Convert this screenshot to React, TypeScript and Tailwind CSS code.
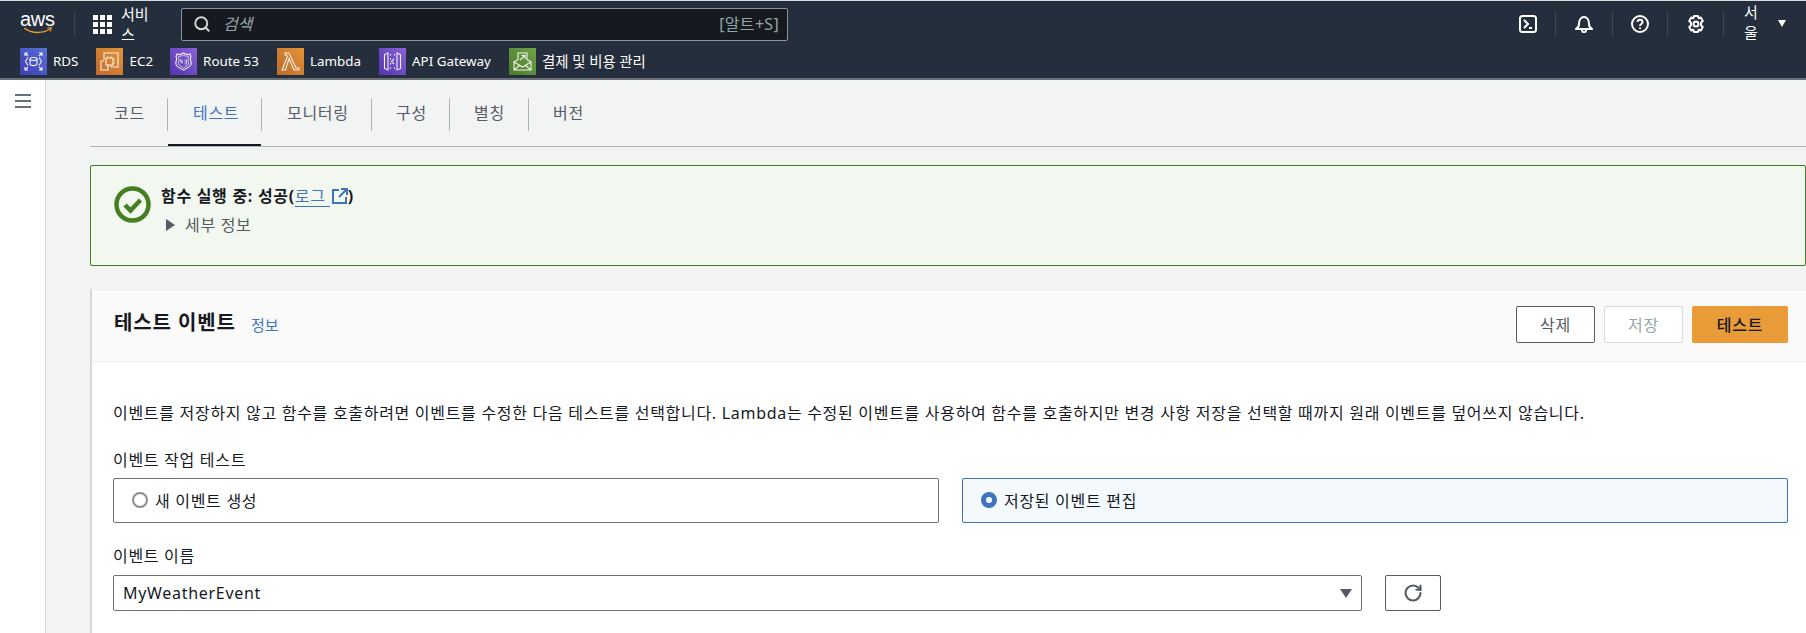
import { RotateCw, Search } from 'lucide-react';
import type { ReactNode } from 'react';

const FONT = 'font-["Noto_Sans","Noto_Sans_CJK_KR",sans-serif]';

const ServiceTile = ({ gradient, children }: { gradient: string; children: ReactNode }) => (
  <span className={`flex h-[27px] w-[27px] shrink-0 items-center justify-center ${gradient}`}>
    <svg viewBox="0 0 27 27" className="h-[27px] w-[27px]" fill="none" stroke="#f4f0ea" strokeWidth="1.1">
      {children}
    </svg>
  </span>
);

const services = [
  {
    name: 'RDS',
    gradient: 'bg-gradient-to-tr from-[#3d3bb5] to-[#5a70d8]',
    gap: 'mr-[18px]',
    text: 'text-[13.400px]',
    icon: (
      <>
        <ellipse cx="13.500" cy="11" rx="3.500" ry="1.500" />
        <path d="M10 11v5c0 1 1.600 1.600 3.500 1.600S17 17 17 16v-5M8 9.500l-2.500 4 2.500 4M19 9.500l2.500 4-2.500 4" />
        <path d="M5 8V5h3M19 5h3v3M5 19v3h3M22 19v3h-3M5 5l3 3M22 5l-3 3M5 22l3-3M22 22l-3-3" />
      </>
    ),
  },
  {
    name: 'EC2',
    gradient: 'bg-gradient-to-tr from-[#bf6a2c] to-[#e39336]',
    gap: 'mr-[17px]',
    text: 'text-[13.400px]',
    icon: (
      <>
        <rect x="10" y="10" width="7" height="7" />
        <path d="M8 12V5h14v14h-7M12 17v5H5v-9h3" />
        <path d="M12 8v2M15 8v2M12 17v2M15 17v2M17 12h2M17 15h2" strokeWidth="0.8" />
      </>
    ),
  },
  {
    name: 'Route 53',
    gradient: 'bg-gradient-to-tr from-[#5433ad] to-[#8b62d8]',
    gap: 'mr-[18px]',
    text: 'text-[13.400px]',
    icon: (
      <>
        <path d="M7 6c2 1 4 .5 6.500-1 2.500 1.500 4.500 2 6.500 1l1 2.500c-1 1.500-1 3 0 5 1 3-1 6-7.500 8.500C7 19.500 5 16.500 6 13.500c1-2 1-3.500 0-5z" />
        <path d="M9 8c1.500.3 3 0 4.500-.8C15 8 16.500 8.300 18 8l.5 1.500c-.8 1.500-.8 3 0 4.500.6 2-1 4-5 5.800-4-1.800-5.600-3.800-5-5.800.8-1.500.8-3 0-4.500z" strokeWidth="0.8" />
        <path d="M10.500 15h2v-1.500h-2V12h2M14.500 12h2v4h-2M14.500 14h2" strokeWidth="0.7" />
      </>
    ),
  },
  {
    name: 'Lambda',
    gradient: 'bg-gradient-to-tr from-[#bf6a2c] to-[#e39336]',
    gap: 'mr-[18px]',
    text: 'text-[13.400px]',
    icon: <path d="M8 5h4l7 15h3v2h-5L12 10.500 8.500 22H5l5.500-13.500L9.500 7H8z" />,
  },
  {
    name: 'API Gateway',
    gradient: 'bg-gradient-to-tr from-[#5433ad] to-[#8b62d8]',
    gap: 'mr-[18px]',
    text: 'text-[13.400px]',
    icon: (
      <>
        <path d="M9 5 5.500 6.500v14L9 22zM18 5l3.500 1.500v14L18 22z" />
        <path d="M11.500 6v1.500M11.500 10v1.500M11.500 15v1.500M11.500 19.500V21M15.500 6v1.500M15.500 19.500V21M15 11l-2.500 2.500L15 16" />
      </>
    ),
  },
  {
    name: '결제 및 비용 관리',
    gradient: 'bg-gradient-to-tr from-[#4a7a2c] to-[#71a348]',
    gap: '',
    text: 'text-[14.400px]',
    icon: (
      <>
        <path d="M9 12V5h9v7" />
        <path d="M5 14l4-2.500M22 14l-4-2.500M5 14v8h17v-8l-8.500 5zM5 22l6-5M22 22l-6-5" />
        <path d="M11 12l5-4.500M12.500 7.500H16V11" />
      </>
    ),
  },
];

const tabs = [
  { name: '코드', width: 'w-[78px] pl-[24px]', active: false },
  { name: '테스트', width: 'w-[94px] pl-[25px]', active: true },
  { name: '모니터링', width: 'w-[110px] pl-[25px]', active: false },
  { name: '구성', width: 'w-[78px] pl-[24px]', active: false },
  { name: '별칭', width: 'w-[79px] pl-[24px]', active: false },
  { name: '버전', width: 'w-[80px] pl-[24px]', active: false },
];

const TopDivider = ({ className }: { className: string }) => (
  <span className={`h-[26px] w-px bg-[#414750] ${className}`} />
);

const RadioTile = ({ label, selected }: { label: string; selected?: boolean }) => (
  <div
    className={`flex h-[45px] flex-1 items-start rounded-[2px] border pl-[18px] pt-[12px] ${
      selected ? 'border-[#3f74bd] bg-[#f4f9fe]' : 'border-[#6f7175] bg-white'
    }`}
  >
    {selected ? (
      <span className="mt-[1px] h-[16px] w-[16px] rounded-full border-[5px] border-[#3f74bd] bg-white" />
    ) : (
      <span className="mt-[1px] h-[16px] w-[16px] rounded-full border-2 border-[#8a8d91] bg-white" />
    )}
    <span className="ml-[7px] leading-[20px] text-[#16191f]">{label}</span>
  </div>
);

export default function App() {
  return (
    <div className={`flex h-[633px] w-[1806px] flex-col overflow-hidden bg-[#f2f3f3] ${FONT}`}>
      {/* Top nav */}
      <header className="h-[80px] shrink-0 border-t border-b-2 border-t-[#d5dbdb] border-b-[#6a7078] bg-[#252e3c] text-white">
        <div className="flex h-[46px] items-center">
          <div className="relative ml-[20px] h-[24px] w-[36px]">
            <span className='absolute left-0 top-[-5px] font-["Liberation_Sans",sans-serif] text-[20px] leading-[24px] tracking-[-0.3px]'>aws</span>
            <svg viewBox="0 0 42 12" className="absolute left-0 top-[15px] h-[8px] w-[36px]" fill="none">
              <path d="M1 2c11 8 27 8 38 1" stroke="#e9962f" strokeWidth="2.200" strokeLinecap="round" />
              <path d="M35 1.500l6-.5-1.500 5.500" stroke="#e9962f" strokeWidth="1.800" />
            </svg>
          </div>
          <TopDivider className="ml-[18px]" />
          <svg viewBox="0 0 19 19" className="ml-[18px] h-[19px] w-[19px]" fill="#fff">
            {[0, 7, 14].map((y) =>
              [0, 7, 14].map((x) => <rect key={`${x}-${y}`} x={x} y={y} width="5" height="5" />)
            )}
          </svg>
          <span className="ml-[9px] w-[41px] text-[15px] leading-[20px]">서비스</span>
          <div className="ml-[19px] flex h-[33px] w-[607px] items-center rounded-[2px] border border-[#8d9399] bg-[#16191f] pl-[11px] pr-[8px]">
            <Search className="h-[18px] w-[18px] text-[#d5dbdb]" strokeWidth={2.500} />
            <span className="ml-[12px] text-[16px] italic text-[#95a5a6]">검색</span>
            <span className="ml-auto text-[16px] tracking-[0.3px] text-[#95a5a6]">[알트+S]</span>
          </div>
          <div className="ml-auto flex h-[26px] items-center">
            <svg viewBox="0 0 18 18" className="h-[18px] w-[18px]" fill="none" stroke="#fff" strokeWidth="2">
              <rect x="1" y="1" width="16" height="16" rx="2.500" />
              <path d="M5 5l4 4-4 4M10 13h3" />
            </svg>
            <TopDivider className="ml-[18px] mr-[19px]" />
            <svg viewBox="0 0 18 18" className="h-[18px] w-[18px]" fill="none" stroke="#fff" strokeWidth="2">
              <path d="M1 14c2-1 3-2 3-5 0-4 2-7 5-7s5 3 5 7c0 3 1 4 3 5z" strokeLinejoin="round" />
              <path d="M7 15c0 3 4 3 4 0" />
            </svg>
            <TopDivider className="ml-[19px] mr-[18px]" />
            <svg viewBox="0 0 18 18" className="h-[18px] w-[18px]" fill="none" stroke="#fff" strokeWidth="2">
              <circle cx="9" cy="9" r="8" />
              <path d="M6.500 7c0-3 5-3 5 0 0 2-2.500 2-2.500 4" />
              <path d="M9 12.500v1.500" />
            </svg>
            <TopDivider className="ml-[18px] mr-[19px]" />
            <svg viewBox="0 0 18 18" className="h-[18px] w-[18px]" fill="none" stroke="#fff" strokeWidth="2" strokeLinejoin="round">
              <path d="M7 1h4l.6 2.300 2.200-.8 2 3.500-1.700 1.600v2.800L15.800 12l-2 3.500-2.200-.8L11 17H7l-.6-2.300-2.200.8-2-3.500 1.700-1.600V7.600L2.200 6l2-3.500 2.200.8z" />
              <circle cx="9" cy="9" r="2.500" />
            </svg>
            <TopDivider className="ml-[18px] mr-[20px]" />
            <span className="mt-[-4px] w-[26px] text-[15px] leading-[20px]">서울</span>
            <span className="ml-[8px] mr-[20px] mt-[-2px] h-0 w-0 border-x-[4px] border-t-[7px] border-x-transparent border-t-white" />
          </div>
        </div>
        <div className="flex h-[31px] items-start pl-[20px] pt-[1px]">
          {services.map((s) => (
            <div key={s.name} className={`flex items-center ${s.gap}`}>
              <ServiceTile gradient={s.gradient}>{s.icon}</ServiceTile>
              <span className={`ml-[6px] leading-[27px] ${s.text}`}>{s.name}</span>
            </div>
          ))}
        </div>
      </header>

      <div className="flex min-h-0 flex-1">
        {/* Side rail */}
        <aside className="w-[46px] shrink-0 border-r border-[#d5dbdb] bg-white pl-[15px] pt-[14px]">
          <div className="flex h-[14px] w-[16px] flex-col justify-between">
            <span className="h-[2px] bg-[#687078]" />
            <span className="h-[2px] bg-[#687078]" />
            <span className="h-[2px] bg-[#687078]" />
          </div>
        </aside>

        <main className="flex min-w-0 flex-1 flex-col pl-[44px] text-[16px] tracking-[0.7px]">
          {/* Tabs */}
          <nav className="flex h-[67px] shrink-0 items-start border-b border-[#aab7b8] pt-[18px]">
            {tabs.map((t, i) => (
              <div
                key={t.name}
                className={`relative h-[33px] ${t.width} ${i < tabs.length - 1 ? 'border-r border-[#aab7b8]' : ''}`}
              >
                <span className={`leading-[30px] ${t.active ? 'text-[#3f74bd]' : 'text-[#545b64]'}`}>{t.name}</span>
                {t.active && <span className="absolute bottom-[-15px] left-0 right-0 h-[2px] bg-[#16191f]" />}
              </div>
            ))}
          </nav>

          {/* Success flash */}
          <section className="mt-[18px] flex h-[101px] shrink-0 rounded-[2px] border border-[#3f7f1f] bg-[#f2f8f0] pl-[23px] pt-[20px]">
            <svg viewBox="0 0 37 37" className="h-[37px] w-[37px] shrink-0" fill="none" stroke="#467f21">
              <circle cx="18.500" cy="18.500" r="16" strokeWidth="4.500" />
              <path d="M11 19l5.500 5.500 10-10.500" strokeWidth="4.500" />
            </svg>
            <div className="ml-[10px]">
              <div className="flex h-[20px] items-center font-bold leading-[20px] text-[#16191f]">
                함수 실행 중: 성공(
                <span className="border-b border-[#3f74bd] pr-[4px] font-normal text-[#3f74bd]">로그</span>
                <svg viewBox="0 0 16 16" className="ml-[2px] h-[16px] w-[16px]" fill="none" stroke="#3f74bd" strokeWidth="2">
                  <path d="M7 2H1v13h13V9M9 1h6v6M15 1 7 9" />
                </svg>
                )
              </div>
              <div className="mt-[9px] flex items-center pl-[5px] leading-[20px] text-[#545b64]">
                <span className="h-0 w-0 border-y-[6px] border-l-[9px] border-y-transparent border-l-[#545b64]" />
                <span className="ml-[10px]">세부 정보</span>
              </div>
            </div>
          </section>

          {/* Test event card */}
          <section className="mt-[23px] flex-1 border-l-2 border-t border-l-[#d5d8d8] border-t-[#eaeded] bg-white">
            <div className="flex h-[72px] items-start border-b border-[#eaeded] bg-[#fafafa] pl-[22px] pt-[16px]">
              <h2 className="text-[20px] font-bold leading-[34px] tracking-[0.9px] text-[#16191f]">테스트 이벤트</h2>
              <span className="ml-[15px] text-[15px] leading-[38px] tracking-normal text-[#3f74bd]">정보</span>
              <div className="ml-auto mr-[18px] flex gap-[9px]">
                <button className="h-[37px] w-[79px] rounded-[2px] border border-[#545b64] bg-white text-[#545b64]">
                  삭제
                </button>
                <button className="h-[37px] w-[79px] rounded-[2px] border border-[#d5dbdb] bg-white text-[#95a5a6]">
                  저장
                </button>
                <button className="h-[37px] w-[96px] rounded-[2px] bg-[#e99b38] font-medium text-[#16191f]">
                  테스트
                </button>
              </div>
            </div>
            <div className="pl-[21px] pr-[18px]">
              <p className="mt-[41px] leading-[20px] text-[#16191f]">
                이벤트를 저장하지 않고 함수를 호출하려면 이벤트를 수정한 다음 테스트를 선택합니다. Lambda는 수정된 이벤트를 사용하여 함수를 호출하지만 변경 사항 저장을 선택할 때까지 원래 이벤트를 덮어쓰지 않습니다.
              </p>
              <div className="mt-[27px] leading-[20px] text-[#16191f]">이벤트 작업 테스트</div>
              <div className="mt-[8px] flex gap-[23px]">
                <RadioTile label="새 이벤트 생성" />
                <RadioTile label="저장된 이벤트 편집" selected />
              </div>
              <div className="mt-[23px] leading-[20px] text-[#16191f]">이벤트 이름</div>
              <div className="mt-[9px] flex gap-[23px]">
                <div className="flex h-[36px] w-[1249px] items-center rounded-[2px] border border-[#6f7175] bg-white px-[9px] text-[#16191f]">
                  MyWeatherEvent
                  <span className="ml-auto h-0 w-0 border-x-[6px] border-t-[9px] border-x-transparent border-t-[#545b64]" />
                </div>
                <button className="flex h-[36px] w-[56px] items-center justify-center rounded-[2px] border border-[#545b64] bg-white">
                  <RotateCw className="h-[20px] w-[20px] text-[#545b64]" strokeWidth={2.500} />
                </button>
              </div>
            </div>
          </section>
        </main>
      </div>
    </div>
  );
}
